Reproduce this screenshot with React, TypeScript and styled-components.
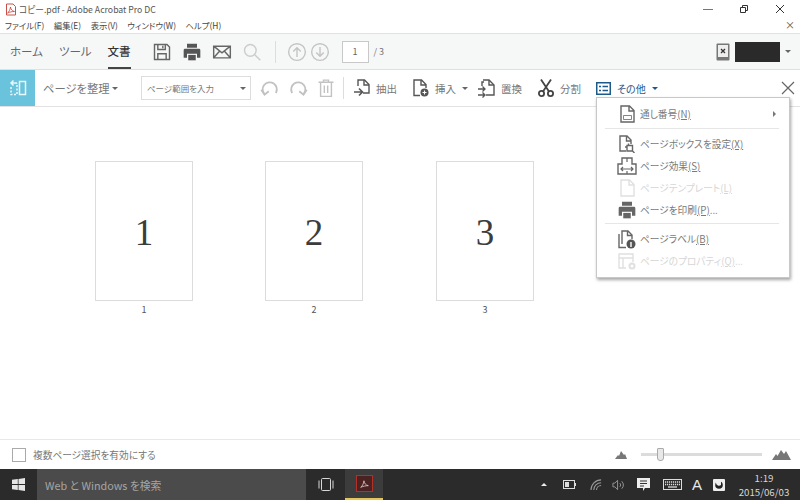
import styled, { createGlobalStyle } from 'styled-components';

const GlobalStyle = createGlobalStyle`
    html, body {
        margin: 0;
        padding: 0;
        background: #fff;
    }
    body {
        font-family: "Noto Sans CJK JP", "Noto Sans", sans-serif;
        font-feature-settings: "palt";
    }
    * {
        box-sizing: border-box;
    }
`;

const Icon = ({ size, children }: { size: number; children: React.ReactNode }) => (
    <svg width={size} height={size} viewBox="0 0 24 24" fill="none" stroke="currentColor" strokeWidth="1.7">
        {children}
    </svg>
);

const AcrobatGlyph = ({ color }: { color: string }) => (
    <path d="M5 19c3-2 5-6 6-12 1 5 3 8 8 9-5 0-9 1-14 3z" stroke={color} strokeWidth="1.4" fill="none" />
);

const PAGES = [1, 2, 3];

const App = () => {
    return (
        <Window>
            <GlobalStyle />
            <TitleBar>
                <AppLogo>
                    <svg width="12" height="13" viewBox="0 0 24 24" fill="#fff" stroke="#c9504a" strokeWidth="2">
                        <path d="M3 1h13l5 5v17H3z" />
                        <AcrobatGlyph color="#c8281e" />
                    </svg>
                </AppLogo>
                <TitleText>コピー.pdf - Adobe Acrobat Pro DC</TitleText>
                <WindowButtons>
                    <svg width="10" height="10" viewBox="0 0 10 10" stroke="#777" fill="none">
                        <path d="M0 5.500h10" />
                    </svg>
                    <svg width="10" height="10" viewBox="0 0 10 10" stroke="#333" fill="none">
                        <path d="M1.500 3.500h5v5h-5zM3.500 3.500v-2h5v5h-2" />
                    </svg>
                    <svg width="10" height="10" viewBox="0 0 10 10" stroke="#333" fill="none">
                        <path d="M1 1l8 8M9 1l-8 8" />
                    </svg>
                </WindowButtons>
            </TitleBar>
            <MenuBar>
                <MenuItem>ファイル(F)</MenuItem>
                <MenuItem>編集(E)</MenuItem>
                <MenuItem>表示(V)</MenuItem>
                <MenuItem>ウィンドウ(W)</MenuItem>
                <MenuItem>ヘルプ(H)</MenuItem>
                <MenuClose>×</MenuClose>
            </MenuBar>
            <MainToolbar>
                <NavTab>ホーム</NavTab>
                <NavTab>ツール</NavTab>
                <NavTab active>文書</NavTab>
                <ToolIcons>
                    <ToolIcon>
                        <Icon size={20}>
                            <path d="M3 3h15l3 3v15H3z" />
                            <path d="M7 3v6h9V3M13 4.500v3M7 21v-7h10v7" />
                        </Icon>
                    </ToolIcon>
                    <ToolIcon>
                        <svg width="20" height="20" viewBox="0 0 24 24" fill="#555">
                            <path d="M6 2h12v5H6zM3 8h18a2 2 0 0 1 1 2v9h-4v-5H6v5H2v-9a2 2 0 0 1 1-2z" />
                            <path d="M7.500 15.500h9V22h-9z" />
                        </svg>
                    </ToolIcon>
                    <ToolIcon>
                        <Icon size={20}>
                            <path d="M2 5h20v14H2zM2 5l10 8 10-8M2 19l7-8M22 19l-7-8" />
                        </Icon>
                    </ToolIcon>
                    <ToolIcon faded>
                        <Icon size={20}>
                            <circle cx="10" cy="10" r="7" />
                            <path d="M15 15l7 7" />
                        </Icon>
                    </ToolIcon>
                </ToolIcons>
                <VDivider />
                <CircleButtons>
                    <Icon size={20}>
                        <circle cx="12" cy="12" r="10" />
                        <path d="M12 18V7M7.500 11.500L12 7l4.500 4.500" />
                    </Icon>
                    <Icon size={20}>
                        <circle cx="12" cy="12" r="10" />
                        <path d="M12 6v11M7.500 12.500L12 17l4.500-4.500" />
                    </Icon>
                </CircleButtons>
                <PageBox>1</PageBox>
                <PageTotal>/ 3</PageTotal>
                <Account>
                    <svg width="14" height="18" viewBox="0 0 14 18">
                        <rect x="0.500" y="0.500" width="13" height="17" rx="1" fill="#777" />
                        <rect x="2" y="2" width="10" height="12" fill="#eee" />
                        <path d="M5 6l4 4M9 6l-4 4" stroke="#333" strokeWidth="1.300" />
                    </svg>
                    <AccountBlock />
                    <Caret />
                </Account>
            </MainToolbar>
            <PageToolbar>
                <PanelToggle>
                    <svg width="20" height="20" viewBox="0 0 20 20" fill="none" stroke="#eaf7fb" strokeWidth="1.500">
                        <rect x="11.500" y="3.500" width="6" height="13" />
                        <path d="M3 9v7.500h6V5" strokeDasharray="2 1.500" />
                        <path d="M9 5H3M5.500 2.500L3 5l2.500 2.500" />
                    </svg>
                </PanelToggle>
                <OrganizeLabel>
                    ページを整理 <Caret />
                </OrganizeLabel>
                <RangeSelect>
                    <span>ページ範囲を入力</span>
                    <Caret />
                </RangeSelect>
                <RotateIcons>
                    <Icon size={20}>
                        <path d="M6 20a8.500 8.500 0 1 1 13-2" strokeWidth="2.200" />
                        <path d="M1.500 14l4 6 5-4" strokeWidth="2.200" />
                    </Icon>
                    <Icon size={20}>
                        <path d="M18 20a8.500 8.500 0 1 0-13-2" strokeWidth="2.200" />
                        <path d="M22.500 14l-4 6-5-4" strokeWidth="2.200" />
                    </Icon>
                    <Icon size={20}>
                        <path d="M3 5h18M9 5V2.500h6V5M5.500 5v17h13V5M10 9v9M14 9v9" />
                    </Icon>
                </RotateIcons>
                <ActionDivider />
                <PageAction>
                    <svg width="16" height="18" viewBox="0 0 16 18" fill="none" stroke="#555" strokeWidth="1.400">
                        <path d="M4 7V1h6.500L15 5.500V14H9" />
                        <path d="M10 1v5h5" />
                        <path d="M0 13h8M5 9.500L8.500 13 5 16.500" strokeWidth="1.600" />
                    </svg>
                    <ActionText>抽出</ActionText>
                </PageAction>
                <PageAction compact>
                    <svg width="16" height="18" viewBox="0 0 16 18" fill="none" stroke="#555" strokeWidth="1.400">
                        <path d="M7 16.500H1V1h7.500L13 5.500V9M8 1v5h5" />
                        <circle cx="11.500" cy="13.500" r="4" fill="#555" stroke="none" />
                        <path d="M9.500 13.500h4M11.500 11.500v4" stroke="#fff" strokeWidth="1.100" />
                    </svg>
                    <ActionText>挿入</ActionText>
                    <Caret />
                </PageAction>
                <PageAction>
                    <svg width="18" height="19" viewBox="0 0 18 19" fill="none" stroke="#555" strokeWidth="1.400">
                        <path d="M5 7V3h2M6 1h6l5 5v10H9" />
                        <path d="M12 1v5h5" />
                        <path d="M1 10h7M5.500 7.500L8 10l-2.500 2.500M1 16h7M5.500 13.500L8 16l-2.500 2.500" strokeWidth="1.300" />
                    </svg>
                    <ActionText>置換</ActionText>
                </PageAction>
                <PageAction>
                    <svg width="16" height="18" viewBox="0 0 16 18" fill="none" stroke="#444" strokeWidth="1.800">
                        <circle cx="3.500" cy="14.500" r="2.600" />
                        <circle cx="12.500" cy="14.500" r="2.600" />
                        <path d="M5 12.500L13 .5M11 12.500L3 .5" />
                    </svg>
                    <ActionText>分割</ActionText>
                </PageAction>
                <MoreAction>
                    <svg width="15" height="13" viewBox="0 0 15 13" fill="none" stroke="#1d5a8c">
                        <rect x="0.750" y="0.750" width="13.500" height="11.500" strokeWidth="1.500" />
                        <path d="M3 4.500h2M3 8.500h2M6.500 4.500h5.500M6.500 8.500h5.500" strokeWidth="1.600" />
                    </svg>
                    <span>その他</span>
                    <Caret dark />
                </MoreAction>
                <PanelClose>
                    <svg width="14" height="14" viewBox="0 0 14 14" stroke="#666" strokeWidth="1.200">
                        <path d="M1 1l12 12M13 1L1 13" />
                    </svg>
                </PanelClose>
                <MoreMenu>
                    <DropItem tall>
                        <DropIcon>
                            <svg width="15" height="18" viewBox="0 0 15 18" fill="none" stroke="#666" strokeWidth="1.400">
                                <path d="M1 1h8.500L14 5.500V17H1zM9 1v5h5" />
                                <path d="M3.500 10.500h8v4h-8z" strokeWidth="0.800" />
                            </svg>
                        </DropIcon>
                        <DropLabel>
                            通し番号<u>(N)</u>
                        </DropLabel>
                        <SubArrow />
                    </DropItem>
                    <DropDivider />
                    <DropItem>
                        <DropIcon>
                            <svg width="16" height="18" viewBox="0 0 16 18" fill="none" stroke="#666" strokeWidth="1.400">
                                <path d="M7 16H1V1h7l4 4v4M7.500 1v5H12" />
                                <path d="M8 10.500h5.500V16H8zM13.500 16l2 2M9.500 8.500v2M6 12h2" />
                            </svg>
                        </DropIcon>
                        <DropLabel>ページボックスを設定<u>(X)</u></DropLabel>
                    </DropItem>
                    <DropItem>
                        <DropIcon>
                            <svg width="20" height="18" viewBox="0 0 20 18" fill="none" stroke="#666" strokeWidth="1.400">
                                <path d="M1 17V7h4V1h10v6h4v10z" />
                                <path d="M4 12h12M6 10l-2 2 2 2M14 10l2 2-2 2M10 1v4M10 14v3" strokeWidth="1.200" />
                            </svg>
                        </DropIcon>
                        <DropLabel>ページ効果<u>(S)</u></DropLabel>
                    </DropItem>
                    <DropItem disabled>
                        <DropIcon>
                            <svg width="15" height="18" viewBox="0 0 15 18" fill="none" stroke="#e0e0e0" strokeWidth="1.400">
                                <path d="M1 1h8.500L14 5.500V17H1zM9 1v5h5" />
                            </svg>
                        </DropIcon>
                        <DropLabel>ページテンプレート<u>(L)</u></DropLabel>
                    </DropItem>
                    <DropItem>
                        <DropIcon>
                            <svg width="20" height="20" viewBox="0 0 24 24" fill="#666">
                                <path d="M6 2h12v5H6zM3 8h18a2 2 0 0 1 1 2v9h-4v-5H6v5H2v-9a2 2 0 0 1 1-2z" />
                                <path d="M7.500 15.500h9V22h-9z" />
                            </svg>
                        </DropIcon>
                        <DropLabel>ページを印刷<u>(P)</u>...</DropLabel>
                    </DropItem>
                    <DropDivider />
                    <DropItem>
                        <DropIcon>
                            <svg width="18" height="19" viewBox="0 0 18 19" fill="none" stroke="#666" strokeWidth="1.400">
                                <path d="M1 4v13.500h7M4 14V1h6l4 4v4M9.500 1v4.500H14" />
                                <circle cx="13" cy="14" r="4.500" fill="#555" stroke="none" />
                                <path d="M13 12v5" stroke="#fff" strokeWidth="1.400" />
                            </svg>
                        </DropIcon>
                        <DropLabel>ページラベル<u>(B)</u></DropLabel>
                    </DropItem>
                    <DropItem disabled>
                        <DropIcon>
                            <svg width="20" height="18" viewBox="0 0 20 18" fill="none" stroke="#e0e0e0" strokeWidth="1.400">
                                <path d="M9 16H2V2h14v8M2 6h14M6 6v10" />
                                <circle cx="15" cy="14" r="2.500" strokeWidth="2" />
                            </svg>
                        </DropIcon>
                        <DropLabel>ページのプロパティ<u>(Q)</u>...</DropLabel>
                    </DropItem>
                </MoreMenu>
            </PageToolbar>
            <Thumbnails>
                {PAGES.map((page) => (
                    <Thumb key={page}>
                        <ThumbSheet>{page}</ThumbSheet>
                        <ThumbLabel>{page}</ThumbLabel>
                    </Thumb>
                ))}
            </Thumbnails>
            <BottomBar>
                <CheckBox />
                <CheckLabel>複数ページ選択を有効にする</CheckLabel>
                <ZoomControls>
                    <svg width="12" height="8" viewBox="0 0 12 8" fill="#777">
                        <path d="M0 8l3-4 1 1 2-5 3 4 1-1 2 5z" />
                    </svg>
                    <SliderTrack>
                        <SliderThumb />
                    </SliderTrack>
                    <svg width="19" height="11" viewBox="0 0 19 11" fill="#777">
                        <path d="M0 11l4-6 1.500 2L9 1l3 4 2-3 5 9z" />
                    </svg>
                </ZoomControls>
            </BottomBar>
            <Taskbar>
                <StartButton>
                    <svg width="13" height="13" viewBox="0 0 13 13" fill="#e6e6e6">
                        <path d="M0 1.800L5.800 1v5.100H0zM6.500.9L13 0v6.100H6.500zM0 6.900h5.800V12L0 11.200zM6.500 6.900H13V13l-6.500-.9z" />
                    </svg>
                </StartButton>
                <SearchBox>Web と Windows を検索</SearchBox>
                <TaskView>
                    <svg width="16" height="13" viewBox="0 0 16 13" fill="none" stroke="#d8d8d8">
                        <rect x="3.500" y="0.500" width="9" height="12" rx="1" />
                        <path d="M1 2.500v8M15 2.500v8" />
                    </svg>
                </TaskView>
                <TaskApp>
                    <AcrobatTile>
                        <svg width="13" height="13" viewBox="0 0 24 24">
                            <AcrobatGlyph color="#e8d8d8" />
                        </svg>
                    </AcrobatTile>
                </TaskApp>
                <Tray>
                    <TrayCaret />
                    <TrayItem gap={16}>
                        <svg width="13" height="9" viewBox="0 0 13 9" fill="none" stroke="#ddd">
                            <rect x="0.500" y="0.500" width="11" height="8" />
                            <rect x="2" y="2" width="4" height="5" fill="#ddd" stroke="none" />
                            <path d="M12.500 3v3" />
                        </svg>
                    </TrayItem>
                    <TrayItem gap={14}>
                        <svg width="13" height="12" viewBox="0 0 14 13" fill="none" stroke="#999" strokeWidth="1.200">
                            <path d="M1 12A11 11 0 0 1 12 1M4 12a8 8 0 0 1 8-8M7 12a5 5 0 0 1 5-5" />
                        </svg>
                    </TrayItem>
                    <TrayItem gap={9}>
                        <svg width="13" height="12" viewBox="0 0 14 12" fill="none" stroke="#999">
                            <path d="M1 4h2l3-3v10L3 8H1zM8.500 4a3 3 0 0 1 0 4M10.500 2a6 6 0 0 1 0 8" />
                        </svg>
                    </TrayItem>
                    <TrayItem gap={12}>
                        <svg width="13" height="14" viewBox="0 0 13 14" fill="#eee">
                            <path d="M0 0h13v10H8l-2 3v-3H0z" />
                            <path d="M3 3h7M3 5.500h7M3 8h4" stroke="#333" />
                        </svg>
                    </TrayItem>
                    <TrayItem gap={13}>
                        <svg width="19" height="11" viewBox="0 0 19 11" fill="none" stroke="#ddd">
                            <rect x="0.500" y="0.500" width="18" height="10" />
                            <path d="M2 3h15M2 5.500h15" strokeDasharray="1.200 .8" strokeWidth="1.300" />
                            <path d="M5 8h9" strokeWidth="1.300" />
                        </svg>
                    </TrayItem>
                    <TrayItem gap={10}>
                        <ImeLetter>A</ImeLetter>
                    </TrayItem>
                    <TrayItem gap={11}>
                        <svg width="12" height="12" viewBox="0 0 12 12">
                            <rect width="12" height="12" rx="1" fill="#eee" />
                            <circle cx="6" cy="6" r="3.800" fill="#222" />
                            <path d="M3 1h5v5a3 3 0 0 1-5-2z" fill="#eee" />
                        </svg>
                    </TrayItem>
                </Tray>
                <Clock>
                    <span>1:19</span>
                    <span>2015/06/03</span>
                </Clock>
            </Taskbar>
        </Window>
    );
};

const Window = styled.div`
    width: 800px;
    height: 500px;
    display: flex;
    flex-direction: column;
    overflow: hidden;
    background: #fff;
    color: #555;
`;

const TitleBar = styled.div`
    height: 18px;
    flex: none;
    display: flex;
    align-items: center;
    padding: 0 0 0 5px;
`;

const AppLogo = styled.div`
    display: flex;
    width: 13px;
`;

const TitleText = styled.span`
    font-size: 8.700px;
    color: #555;
    margin-left: 1px;
`;

const WindowButtons = styled.div`
    margin-left: auto;
    display: flex;
    gap: 26px;
    padding-right: 15px;
`;

const MenuBar = styled.div`
    height: 16px;
    flex: none;
    display: flex;
    align-items: center;
    padding: 0 0 2px 5px;
    gap: 9.500px;
    border-bottom: 1px solid #e2e2e2;
`;

const MenuItem = styled.span`
    font-size: 8.400px;
    color: #444;
`;

const MenuClose = styled.span`
    margin-left: auto;
    margin-right: 5px;
    font-size: 10px;
    color: #555;
`;

const MainToolbar = styled.div`
    height: 36px;
    flex: none;
    display: flex;
    align-items: center;
    padding-left: 10px;
    background: #f6f8f8;
    border-bottom: 1px solid #e0e0e0;
`;

const NavTab = styled.div<{ active?: boolean }>`
    height: 100%;
    display: flex;
    align-items: center;
    margin-right: 16px;
    font-size: 11.500px;
    color: ${(props) => (props.active ? '#333' : '#666')};
    font-weight: ${(props) => (props.active ? 500 : 400)};
    border-bottom: 2px solid ${(props) => (props.active ? '#444' : 'transparent')};
`;

const ToolIcons = styled.div`
    display: flex;
    align-items: center;
    gap: 10px;
    margin-left: 5px;
`;

const ToolIcon = styled.div<{ faded?: boolean }>`
    display: flex;
    color: ${(props) => (props.faded ? '#ccc' : '#666')};
`;

const VDivider = styled.div`
    width: 1px;
    height: 22px;
    background: #ddd;
    margin: 0 11px 0 13px;
`;

const ActionDivider = styled(VDivider)`
    margin: 0 10px 0 7px;
`;

const CircleButtons = styled.div`
    display: flex;
    gap: 3px;
    color: #c4c4c4;
    margin-right: 12px;
`;

const PageBox = styled.div`
    width: 27px;
    height: 22px;
    border: 1px solid #c8c8c8;
    background: #fff;
    font-size: 9px;
    color: #666;
    display: flex;
    align-items: center;
    justify-content: center;
`;

const PageTotal = styled.span`
    margin-left: 5px;
    font-size: 9px;
    color: #777;
`;

const Account = styled.div`
    margin-left: auto;
    display: flex;
    align-items: center;
    gap: 5px;
    padding-right: 9px;
`;

const AccountBlock = styled.div`
    width: 45px;
    height: 20px;
    background: #2a2a2a;
`;

const Caret = styled.i<{ dark?: boolean }>`
    display: inline-block;
    flex: none;
    width: 0;
    height: 0;
    border-left: 3px solid transparent;
    border-right: 3px solid transparent;
    border-top: 3px solid ${(props) => (props.dark ? '#1d5a8c' : '#666')};
`;

const PageToolbar = styled.div`
    position: relative;
    height: 37px;
    flex: none;
    display: flex;
    align-items: center;
    border-bottom: 1px solid #e2e2e2;
`;

const PanelToggle = styled.div`
    width: 35px;
    height: 100%;
    background: #69c3dc;
    display: flex;
    align-items: center;
    justify-content: center;
`;

const OrganizeLabel = styled.div`
    margin-left: 8px;
    width: 98px;
    font-size: 11.300px;
    color: #777;
    display: flex;
    align-items: center;
    gap: 3px;
`;

const RangeSelect = styled.div`
    width: 110px;
    height: 24px;
    border: 1px solid #ddd;
    padding: 0 4px 0 5px;
    display: flex;
    align-items: center;
    justify-content: space-between;
    font-size: 8.500px;
    color: #777;
`;

const RotateIcons = styled.div`
    display: flex;
    gap: 8px;
    margin-left: 9px;
    color: #c2c2c2;
`;

const PageAction = styled.div<{ compact?: boolean }>`
    display: flex;
    align-items: center;
    gap: 6px;
    margin-right: ${(props) => (props.compact ? '9px' : '16px')};
    color: #555;
`;

const ActionText = styled.span`
    font-size: 10.500px;
    color: #777;
`;

const MoreAction = styled.div`
    display: flex;
    align-items: center;
    gap: 6px;
    margin-left: -1px;
    font-size: 10px;
    color: #1d5a8c;
`;

const PanelClose = styled.div`
    margin-left: auto;
    margin-right: 5px;
    display: flex;
`;

const MoreMenu = styled.div`
    position: absolute;
    top: 27px;
    left: 596px;
    width: 194px;
    height: 181px;
    padding: 4px 10px 0 0;
    background: #fff;
    border: 1px solid #c8c8c8;
    box-shadow: 1px 2px 3px rgba(0, 0, 0, 0.35);
    z-index: 2;
`;

const DropItem = styled.div<{ disabled?: boolean; tall?: boolean }>`
    height: ${(props) => (props.tall ? '24px' : '22px')};
    display: flex;
    align-items: center;
    font-size: 9.700px;
    color: ${(props) => (props.disabled ? '#d6d6d6' : '#7a7a7a')};
`;

const DropIcon = styled.div`
    width: 22px;
    margin-left: 19px;
    margin-right: 2px;
    display: flex;
    justify-content: center;
`;

const DropLabel = styled.span`
    u {
        text-underline-offset: 1px;
    }
`;

const SubArrow = styled.i`
    margin-left: auto;
    margin-right: 3px;
    width: 0;
    height: 0;
    border-top: 3px solid transparent;
    border-bottom: 3px solid transparent;
    border-left: 3px solid #777;
`;

const DropDivider = styled.div`
    height: 1px;
    margin: 2px 0 4px 8px;
    background: #e6e6e6;
`;

const Thumbnails = styled.div`
    flex: 1;
    display: flex;
    gap: 72px;
    padding: 54px 0 0 95px;
`;

const Thumb = styled.div`
    width: 98px;
    flex: none;
    display: flex;
    flex-direction: column;
    align-items: center;

    &:last-child {
        margin-left: 1px;
    }
`;

const ThumbSheet = styled.div`
    width: 98px;
    height: 140px;
    padding-top: 3px;
    border: 1px solid #dcdcdc;
    display: flex;
    align-items: center;
    justify-content: center;
    font-family: "Liberation Serif", serif;
    font-size: 37px;
    color: #3c3c3c;
`;

const ThumbLabel = styled.div`
    margin-top: 2px;
    font-size: 9px;
    line-height: 14px;
    color: #555;
`;

const BottomBar = styled.div`
    height: 30px;
    flex: none;
    display: flex;
    align-items: center;
    padding-left: 12px;
    border-top: 1px solid #e8e8e8;
`;

const CheckBox = styled.div`
    width: 14px;
    height: 14px;
    border: 1px solid #aaa;
`;

const CheckLabel = styled.span`
    margin-left: 7px;
    font-size: 9.700px;
    color: #777;
`;

const ZoomControls = styled.div`
    margin-left: auto;
    display: flex;
    align-items: center;
    padding-right: 9px;
`;

const SliderTrack = styled.div`
    position: relative;
    width: 121px;
    height: 3px;
    margin: 0 10px 0 14px;
    background: #dcdcdc;
`;

const SliderThumb = styled.div`
    position: absolute;
    left: 16px;
    top: -5px;
    width: 7px;
    height: 13px;
    background: #e8e8e8;
    border: 1px solid #aaa;
    border-radius: 1px 1px 3px 3px;
`;

const Taskbar = styled.div`
    height: 31px;
    flex: none;
    display: flex;
    align-items: stretch;
    background: #2b2b2b;
`;

const StartButton = styled.div`
    width: 37px;
    display: flex;
    align-items: center;
    justify-content: center;
`;

const SearchBox = styled.div`
    width: 269px;
    display: flex;
    align-items: center;
    padding-left: 8px;
    background: #4b4b4b;
    font-size: 10.800px;
    color: #a5a5a5;
`;

const TaskView = styled.div`
    width: 39px;
    display: flex;
    align-items: center;
    justify-content: center;
`;

const TaskApp = styled.div`
    width: 38px;
    display: flex;
    align-items: center;
    justify-content: center;
    background: #3c3c3c;
    border-bottom: 2px solid #e3c65a;
`;

const AcrobatTile = styled.div`
    width: 17px;
    height: 17px;
    background: #4a2222;
    border: 1px solid #b0302a;
    display: flex;
    align-items: center;
    justify-content: center;
`;

const Tray = styled.div`
    margin-left: auto;
    display: flex;
    align-items: center;
`;

const TrayItem = styled.div<{ gap: number }>`
    display: flex;
    align-items: center;
    margin-left: ${(props) => props.gap}px;
`;

const TrayCaret = styled.i`
    width: 0;
    height: 0;
    border-left: 3px solid transparent;
    border-right: 3px solid transparent;
    border-bottom: 3px solid #eee;
`;

const ImeLetter = styled.span`
    font-family: "Liberation Sans", sans-serif;
    font-size: 15px;
    color: #e8e8e8;
`;

const Clock = styled.div`
    width: 64px;
    margin: 0 4px 0 7px;
    display: flex;
    flex-direction: column;
    align-items: center;
    justify-content: center;
    font-size: 9.700px;
    line-height: 14px;
    color: #d8d8d8;
`;

export default App;
